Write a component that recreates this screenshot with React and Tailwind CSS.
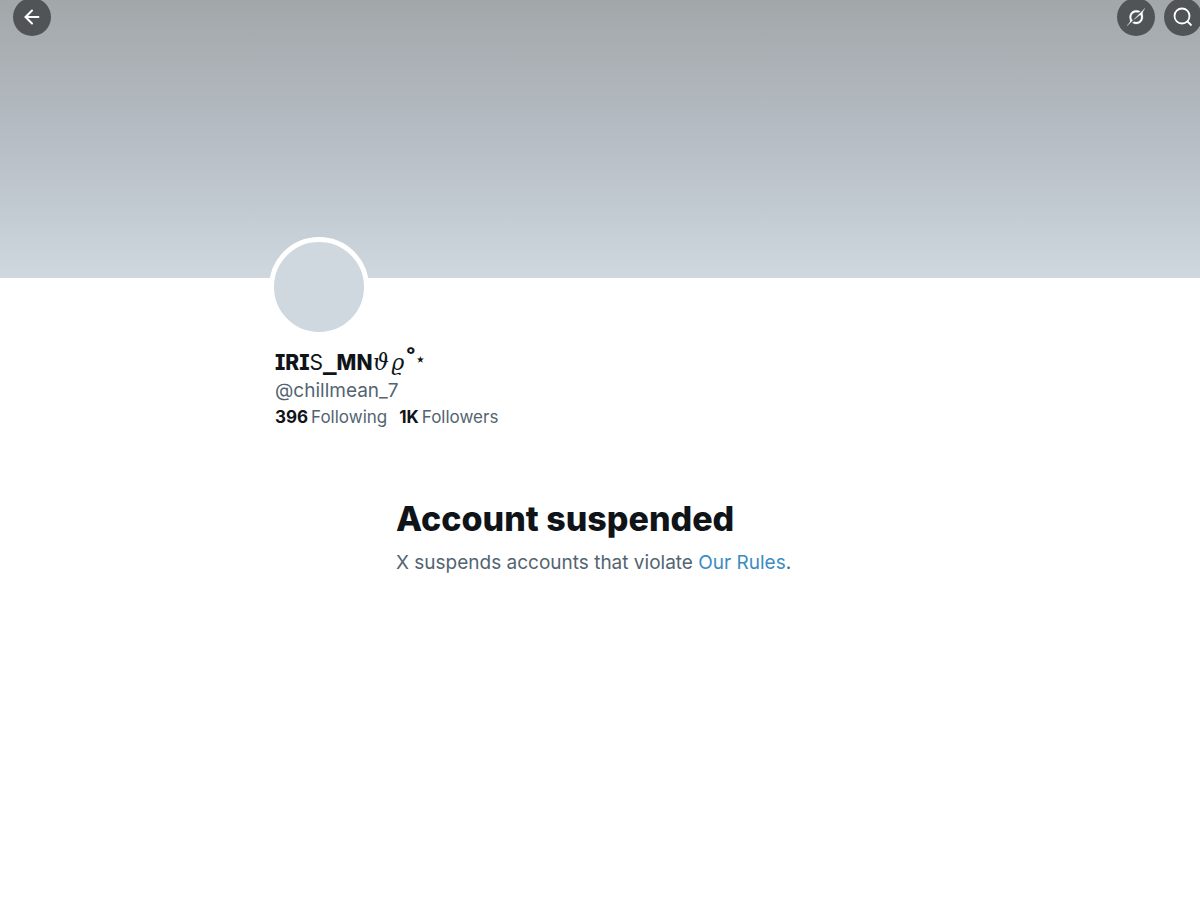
import React from 'react';
import { FiArrowLeft } from 'react-icons/fi';

const profile = {
  handle: '@chillmean_7',
  following: '396',
  followers: '1K',
};

const RoundButton = ({ label, children }) => (
  <button
    type="button"
    aria-label={label}
    className="flex size-[38px] shrink-0 items-center justify-center rounded-full bg-[#505456] text-white"
  >
    {children}
  </button>
);

const GrokIcon = () => (
  <svg viewBox="0 0 33 32" fill="currentColor" stroke="currentColor" strokeWidth="0.5" className="size-[18px]" aria-hidden="true">
    <path d="M12.745 20.54l10.97-8.19c.539-.4 1.307-.244 1.564.38 1.349 3.288.746 7.241-1.938 9.955-2.683 2.714-6.417 3.31-9.83 1.954l-3.728 1.745c5.347 3.697 11.84 2.782 15.898-1.324 3.219-3.255 4.216-7.692 3.284-11.693l.008.009c-1.351-5.878.332-8.227 3.782-13.031L33 0l-4.54 4.59v-.014L12.743 20.544m-2.263 1.987c-3.837-3.707-3.175-9.446.1-12.755 2.42-2.449 6.388-3.448 9.852-1.979l3.72-1.737c-.67-.49-1.53-1.017-2.515-1.387-4.455-1.854-9.789-.931-13.41 2.728-3.483 3.523-4.579 8.94-2.697 13.561 1.405 3.454-.899 5.898-3.22 8.364C1.49 30.2.666 31.074 0 32l10.478-9.466" />
  </svg>
);

const SearchIcon = () => (
  <svg viewBox="0 0 20 20" fill="none" stroke="currentColor" strokeWidth="1.8" className="size-5" aria-hidden="true">
    <circle cx="9" cy="9" r="7.5" />
    <path d="M14.2 14.2l4.3 4.3" />
  </svg>
);

const Banner = () => (
  <header className="h-[278px] overflow-hidden bg-linear-to-b from-[#a2a7aa] via-[#b6bdc4] to-[#cfd8df]">
    <div className="-mx-0.5 -mt-0.5 flex items-center justify-between pl-[15px]">
      <RoundButton label="Back">
        <FiArrowLeft className="size-[22px]" strokeWidth={2.2} />
      </RoundButton>
      <div className="flex gap-[9px]">
        <RoundButton label="Profile summary">
          <GrokIcon />
        </RoundButton>
        <RoundButton label="Search">
          <SearchIcon />
        </RoundButton>
      </div>
    </div>
  </header>
);

const Count = ({ href, value, label }) => (
  <a href={href} className="flex gap-[3px]">
    <span className="font-bold text-[#0f1419]">{value}</span>
    <span>{label}</span>
  </a>
);

const ProfileInfo = () => (
  <section className="mx-auto max-w-[650px]">
    <div className="relative -mt-[41px] -ml-1.5 size-[100px] rounded-full border-[5px] border-white bg-[#cfd8df]" />
    <h1 className="mt-2 flex h-8 items-baseline text-[21px] leading-7 font-extrabold text-[#0f1419]">
      <span className="[font-feature-settings:'cv08']">IRI</span>
      <span className="font-normal">S</span>
      <span className="font-['Noto_Sans',sans-serif] text-3xl leading-7">_</span>
      <span>MN</span>
      <span className="font-['DejaVu_Math_TeX_Gyre',serif] text-[22px] leading-7 font-normal">𝜗𝜚</span>
      <span className="text-[27px] leading-7">˚</span>
      <span className="self-start text-sm leading-7">⋆</span>
    </h1>
    <p className="text-[19px] leading-7 text-[#536471]">{profile.handle}</p>
    <div className="flex gap-3 text-[17px] leading-6 text-[#536471]">
      <Count href="#following" value={profile.following} label="Following" />
      <Count href="#followers" value={profile.followers} label="Followers" />
    </div>
  </section>
);

const SuspendedNotice = () => (
  <section className="mx-auto mt-16 max-w-[408px]">
    <h2 className="text-[34px] leading-[52px] font-extrabold text-[#0f1419]">Account suspended</h2>
    <p className="mt-1 text-[19px] leading-7 text-[#536471]">
      X suspends accounts that violate{' '}
      <a href="#rules" className="text-[#3a8cc4]">
        Our Rules
      </a>
      .
    </p>
  </section>
);

const App = () => {
  return (
    <div className="min-h-screen overflow-hidden bg-white font-['Inter','Noto_Sans',sans-serif]">
      <Banner />
      <main>
        <ProfileInfo />
        <SuspendedNotice />
      </main>
    </div>
  );
};

export default App;
